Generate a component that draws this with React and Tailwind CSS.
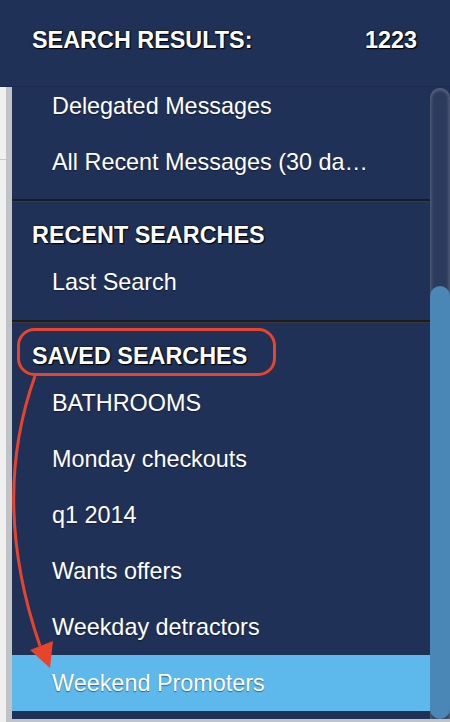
import React from "react";

const NAVY = "bg-[#203158]";

function Item({ children, active }) {
  return (
    <div
      className={`h-[56px] flex items-center pl-[40px] pr-4 text-[23.4px] leading-[26px] text-white whitespace-nowrap [text-shadow:0_1px_1px_rgba(0,0,0,0.45)] ${
        active ? "bg-[#5db8ec]" : ""
      }`}
    >
      {children}
    </div>
  );
}

function Heading({ children }) {
  return (
    <div className="pt-[20px] pb-[6px] pl-[20px] text-[23.4px] leading-[26px] font-bold text-white [text-shadow:0_0_2px_#000,1px_1px_1px_#000]">
      {children}
    </div>
  );
}

function Divider() {
  return <div className="h-[3px] border-t-2 border-[#1b1c1f] bg-[#3a3a38]" />;
}

export default function App() {
  return (
    <div className="relative w-[450px] h-[722px] overflow-hidden bg-[#f0f0f0] font-['Liberation_Sans',Arial,sans-serif]">
      <div
        className={`h-[87px] ${NAVY} border-b border-[#1b2a4c] flex justify-between items-start pt-[27px] pl-[32px] pr-[33px] text-[23.4px] leading-[26px] font-bold text-white [text-shadow:0_0_2px_#000,1px_1px_1px_#000]`}
      >
        <span>SEARCH RESULTS:</span>
        <span>1223</span>
      </div>
      <div className="flex h-[635px]">
        <div className="w-[6px] flex flex-col">
          <div className="h-[72px]" />
          <div className="h-[1px] bg-[#c8c8c8]" />
        </div>
        <div className="flex-1 bg-[#c1c4c7] pl-[6px] pb-[3px]">
          <div className={`relative h-full overflow-hidden ${NAVY}`}>
            <div className="-mt-[9px] pr-[20px] flex flex-col">
              <Item>Delegated Messages</Item>
              <Item>All Recent Messages (30 da…</Item>
              <div className="h-[9px]" />
              <Divider />
              <Heading>RECENT SEARCHES</Heading>
              <Item>Last Search</Item>
              <div className="h-[10px]" />
              <Divider />
              <Heading>SAVED SEARCHES</Heading>
              <Item>BATHROOMS</Item>
              <Item>Monday checkouts</Item>
              <Item>q1 2014</Item>
              <Item>Wants offers</Item>
              <Item>Weekday detractors</Item>
              <Item active>Weekend Promoters</Item>
            </div>
            <div className="absolute right-0 top-[1px] bottom-0 w-[20px] rounded-t-[10px] bg-[#2c3b5d] shadow-[inset_2px_0_3px_rgba(255,255,255,0.12),inset_-2px_0_3px_rgba(255,255,255,0.12),inset_0_3px_3px_rgba(255,255,255,0.12)]">
              <div className="absolute left-0 right-0 top-[198px] bottom-0 rounded-[10px] bg-[#4a87b6]" />
            </div>
          </div>
        </div>
      </div>
      <svg
        className="absolute inset-0 pointer-events-none"
        width="450"
        height="722"
        viewBox="0 0 450 722"
      >
        <rect
          x="18.5"
          y="329.5"
          width="256"
          height="45"
          rx="16"
          fill="none"
          stroke="#e8432b"
          strokeWidth="3"
        />
        <path
          d="M35 376 C 12 440, 0 530, 40 646"
          fill="none"
          stroke="#e8432b"
          strokeWidth="3"
        />
        <polygon points="30,650 53,641 50,668" fill="#e8432b" />
      </svg>
    </div>
  );
}
